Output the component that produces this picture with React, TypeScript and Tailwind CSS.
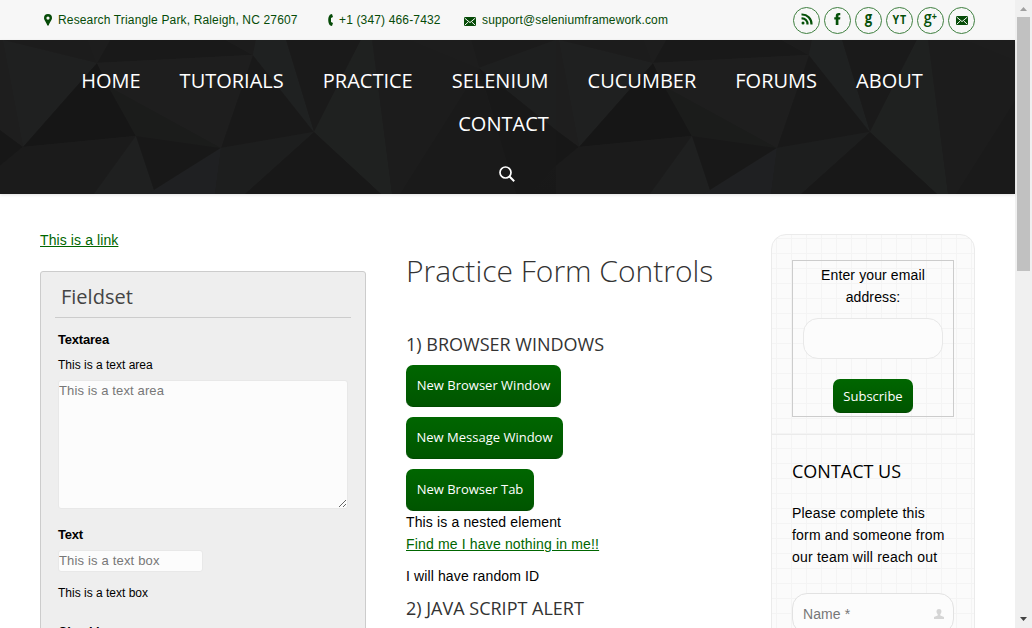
import React from "react";

const navTop = ["HOME", "TUTORIALS", "PRACTICE", "SELENIUM", "CUCUMBER", "FORUMS", "ABOUT"];

function Mail({ className }: { className: string }) {
  return (
    <svg viewBox="0 0 12 9" className={className} fill="none">
      <rect width="12" height="9" rx="1.2" fill="#064b08" />
      <path d="M.8 1.2 6 5.6 11.2 1.2M1 8l3.2-3M11 8 7.8 5" stroke="#f7f7f7" strokeWidth="1" />
    </svg>
  );
}

function Facets() {
  return (
    <svg className="absolute inset-0 h-full w-full" aria-hidden="true">
      <defs>
        <linearGradient id="base" x1="0" y1="0" x2="0" y2="1">
          <stop offset="0" stopColor="#1d1d1d" />
          <stop offset="1" stopColor="#181818" />
        </linearGradient>
        <pattern id="facets" width="556" height="154" patternUnits="userSpaceOnUse">
          <rect width="556" height="154" fill="url(#base)" />
          <path d="M3 0 97 23 23 107Z" fill="#1f2020" />
          <path d="M3 0 23 107 0 90V0Z" fill="#1e1e1e" />
          <path d="M3 0H88L97 23Z" fill="#1c1c1c" />
          <path d="M88 0H110L97 23Z" fill="#1d1d1d" />
          <path d="M110 0H226L253 15 97 23Z" fill="#191919" />
          <path d="M97 23 136 96 23 107Z" fill="#161616" />
          <path d="M97 23 253 15 221 108 108 46Z" fill="#1e1e1e" />
          <path d="M108 46 221 108 136 96Z" fill="#1b1c1b" />
          <path d="M253 15 314 92 221 108Z" fill="#191919" />
          <path d="M226 0H256L253 15Z" fill="#1c1c1c" />
          <path d="M256 0H286L314 92 253 15Z" fill="#1f2121" />
          <path d="M286 0H361L314 92Z" fill="#1a1a1a" />
          <path d="M361 0H372L392 154H381L314 92Z" fill="#1f2120" />
          <path d="M372 0H411L479 28 400 154H392Z" fill="#1c1c1c" />
          <path d="M411 0H471L479 28Z" fill="#1d1d1d" />
          <path d="M471 0H556L479 28Z" fill="#1b1b1b" />
          <path d="M479 28 556 0V90Z" fill="#1e1f1f" />
          <path d="M479 28 516 154H400Z" fill="#1a1a1a" />
          <path d="M479 28 556 90V126L530 154H516Z" fill="#181818" />
          <path d="M0 90 23 107 0 126Z" fill="#171717" />
          <path d="M23 107 136 96 94 154H0V126Z" fill="#1b1b1b" />
          <path d="M136 96 154 150 147 154H94Z" fill="#1f2020" />
          <path d="M136 96 221 108 154 150Z" fill="#181818" />
          <path d="M221 108 215 154H147L154 150Z" fill="#1f2022" />
          <path d="M221 108 314 92 245 154H215Z" fill="#1d1e1e" />
          <path d="M314 92 381 154H245Z" fill="#181818" />
        </pattern>
      </defs>
      <rect width="100%" height="100%" fill="url(#facets)" />
    </svg>
  );
}

function Social({ children }: { children: React.ReactNode }) {
  return (
    <a className="flex size-[27px] items-center justify-center rounded-full border border-[#3f8040] font-['Open_Sans',sans-serif] font-bold text-[#055008]">
      {children}
    </a>
  );
}

function GreenButton({ children, className }: { children: string; className: string }) {
  return (
    <button
      className={`rounded-[7px] border-b border-[#004a00] bg-gradient-to-b from-[#006600] to-[#005500] text-center font-['Open_Sans',sans-serif] text-[13px] font-medium text-white ${className}`}
    >
      {children}
    </button>
  );
}

export default function App() {
  return (
    <div className="flex h-[628px] w-[1032px] overflow-hidden bg-white font-['Liberation_Sans',Arial,sans-serif] text-sm text-black">
      <div className="flex w-[1015px] flex-col">
        <div className="flex h-10 shrink-0 items-center bg-[#f7f7f7] pr-10 pl-[44px] text-xs text-[#064b08]">
          <svg viewBox="0 0 8 12" className="mr-[6px] h-3 w-2">
            <path fillRule="evenodd" d="M4 0a4 4 0 0 1 4 4c0 2-2 3.500-3.300 7.500H3.300C2 7.500 0 6 0 4a4 4 0 0 1 4-4m0 2.500a1.600 1.600 0 1 0 0 3.200 1.600 1.600 0 0 0 0-3.200" fill="#064b08" />
          </svg>
          <span className="w-[270px] whitespace-nowrap tracking-[0.15px]">Research Triangle Park, Raleigh, NC 27607</span>
          <svg viewBox="0 0 5 12" className="mr-[6px] h-3 w-[5px]">
            <path d="M4 0C-1 0-1 12 4 12L5 9 3 8V4L5 3Z" fill="#064b08" />
          </svg>
          <span className="w-[125px] whitespace-nowrap tracking-[0.15px]">+1 (347) 466-7432</span>
          <Mail className="mr-[6px] h-[9px] w-3 translate-y-px" />
          <span className="tracking-[0.13px]">support@seleniumframework.com</span>
          <div className="ml-auto flex gap-1">
            <Social>
              <svg viewBox="0 0 12 12" className="size-3 -translate-y-px" fill="none" stroke="#055008" strokeWidth="2.2">
                <path d="M.5 5.500A5.500 5.500 0 0 1 6.500 11.500M.5 1.500A9.500 9.500 0 0 1 10.500 11.500" />
                <circle cx="2" cy="10" r="1.500" fill="#055008" stroke="none" />
              </svg>
            </Social>
            <Social>
              <svg viewBox="0 0 7 13" className="h-3 w-[7px] -translate-y-px"><path d="M6.500 0H5C2.600 0 1.600 1.300 1.600 3.200V4.500H0V7H1.600V13H4.500V7H6.300L6.600 4.500H4.500V3.500C4.500 2.700 4.800 2.400 5.400 2.400H6.500Z" fill="#055008" /></svg>
            </Social>
            <Social><span className="-mt-[7px] scale-x-[0.82] text-[16px] leading-none">g</span></Social>
            <Social><span className="-mt-[2px] scale-x-[0.82] text-[13px] leading-none tracking-[1px]">YT</span></Social>
            <Social><span className="-mt-[7px] flex scale-x-90 text-[16px] leading-none font-semibold">g<span className="mt-[2px] text-[10px] leading-none font-bold">+</span></span></Social>
            <Social><Mail className="h-[9px] w-3" /></Social>
          </div>
        </div>

        <header className="relative h-[154px] shrink-0 shadow-[0_1px_3px_rgba(0,0,0,0.12)]">
          <Facets />
          <nav className="relative flex flex-col items-center pt-[19px] pr-[11px] font-['Open_Sans',sans-serif] text-[20px] leading-[43px] text-white">
            <div className="flex gap-[39px]">
              {navTop.map((n) => <a key={n}>{n}</a>)}
            </div>
            <a className="pl-[3px]">CONTACT</a>
            <svg viewBox="0 0 16 16" className="mt-[21px] ml-[9px] size-4" fill="none" stroke="white" strokeWidth="1.700">
              <circle cx="6.500" cy="6.500" r="5.500" />
              <path d="m10.500 10.500 4.700 4.700" strokeWidth="2" />
            </svg>
          </nav>
        </header>

        <main className="flex h-[434px] items-start pl-10">
          <section className="w-[326px] shrink-0 pt-[35px]">
            <a className="block leading-[22px] tracking-[0.1px] text-[#006600] underline">This is a link</a>
            <div className="mt-5 h-[400px] rounded-[3px] border border-[#ccc] bg-[#eee] px-[14px]">
              <h3 className="h-[46px] border-b border-[#ccc] pl-[6px] font-['Open_Sans',sans-serif] text-[20px] leading-[50px] text-[#444]">Fieldset</h3>
              <div className="px-[3px]">
                <b className="mt-[13px] block text-[13px] leading-[18px] tracking-[-0.2px]">Textarea</b>
                <p className="mt-[7px] text-xs leading-[18px]">This is a text area</p>
                <textarea className="mt-[6px] block h-[129px] w-[290px] rounded-[3px] border border-[#e8e8e8] bg-[#fcfcfc] text-[13px] leading-[19px] tracking-[0.13px] placeholder:text-[#777]" placeholder="This is a text area" />
                <b className="mt-[17px] block text-[13px] leading-[18px] tracking-[-0.2px]">Text</b>
                <input className="mt-[6px] block h-[22px] w-[145px] rounded-[3px] border border-[#e8e8e8] bg-[#fcfcfc] pb-[2px] text-[13px] tracking-[0.17px] placeholder:text-[#777]" placeholder="This is a text box" />
                <p className="mt-[12px] text-xs leading-[18px]">This is a text box</p>
                <b className="mt-[21px] block text-[13px] leading-[18px] tracking-[-0.2px]">Checkboxes</b>
              </div>
            </div>
          </section>

          <section className="ml-10 w-[325px] shrink-0 pt-[55px]">
            <h1 className="font-['Open_Sans',sans-serif] text-[30px] leading-[44px] font-light text-[#333]">Practice Form Controls</h1>
            <h2 className="mt-[40px] font-['Open_Sans',sans-serif] text-[18px] leading-[22px] text-[#333]">1) BROWSER WINDOWS</h2>
            <div className="mt-[10px] flex flex-col items-start gap-[10px]">
              <GreenButton className="h-[42px] w-[155px]">New Browser Window</GreenButton>
              <GreenButton className="h-[42px] w-[157px]">New Message Window</GreenButton>
              <GreenButton className="h-[42px] w-[128px]">New Browser Tab</GreenButton>
            </div>
            <p className="leading-[22px] tracking-[0.14px]">This is a nested element</p>
            <a className="block leading-[22px] tracking-[0.16px] text-[#006600] underline">Find me I have nothing in me!!</a>
            <p className="mt-[10px] leading-[22px] tracking-[0.12px]">I will have random ID</p>
            <h2 className="mt-[10px] font-['Open_Sans',sans-serif] text-[18px] leading-[22px] text-[#333]">2) JAVA SCRIPT ALERT</h2>
          </section>

          <aside className="mt-10 ml-10 h-[420px] w-[204px] shrink-0 rounded-t-[15px] border border-[#ebebeb] bg-[#fbfbfb] bg-[linear-gradient(to_right,#f4f4f4_1px,transparent_1px),linear-gradient(to_bottom,#f4f4f4_1px,transparent_1px)] bg-[size:15px_15px] bg-[position:4px_3px]">
            <div className="h-[200px] border-b border-[#ebebeb] px-5 pt-[25px]">
              <form className="flex h-[157px] flex-col items-center border border-[#ccc] px-[10px] pt-[3px] text-center">
                <p className="leading-[22px] tracking-[0.12px]">Enter your email<br />address:</p>
                <input className="mt-[10px] h-[41px] w-[140px] shrink-0 rounded-[15px] border border-[#e8e8e8] bg-[#fcfcfc]" />
                <GreenButton className="mt-5 h-[34px] w-20 shrink-0 pt-px">Subscribe</GreenButton>
              </form>
            </div>
            <div className="px-5 pt-[24px]">
              <h2 className="font-['Open_Sans',sans-serif] text-[18px] leading-[24px]">CONTACT US</h2>
              <p className="mt-[19px] leading-[22px] tracking-[0.19px] whitespace-nowrap">Please complete this<br />form and someone from<br />our team will reach out</p>
              <div className="mt-[25px] flex h-[41px] w-[162px] items-center justify-between rounded-[15px] border border-[#e2e2e2] bg-[#fcfcfc] px-[10px] pr-[9px] tracking-[0.1px] text-[#777]">
                Name *
                <svg viewBox="0 0 10 10" className="size-[10px]" fill="#d5d5d5"><path d="M5 0C8 0 8 3.500 6.300 5.200V6.500L10 8V10H0V8L3.700 6.500V5.200C2 3.500 2 0 5 0" /></svg>
              </div>
            </div>
          </aside>
        </main>
      </div>
      <div className="flex w-[17px] flex-col items-center bg-[#f0f0f0]">
        <svg viewBox="0 0 17 17" className="size-[17px] shrink-0"><path d="M5 11 8.500 7 12 11Z" fill="#a0a0a0" /></svg>
        <div className="h-[254px] w-[13px] bg-[#c1c1c1]" />
        <svg viewBox="0 0 17 17" className="mt-auto size-[17px] shrink-0"><path d="M5 6 8.500 10 12 6Z" fill="#444" /></svg>
      </div>
    </div>
  );
}
